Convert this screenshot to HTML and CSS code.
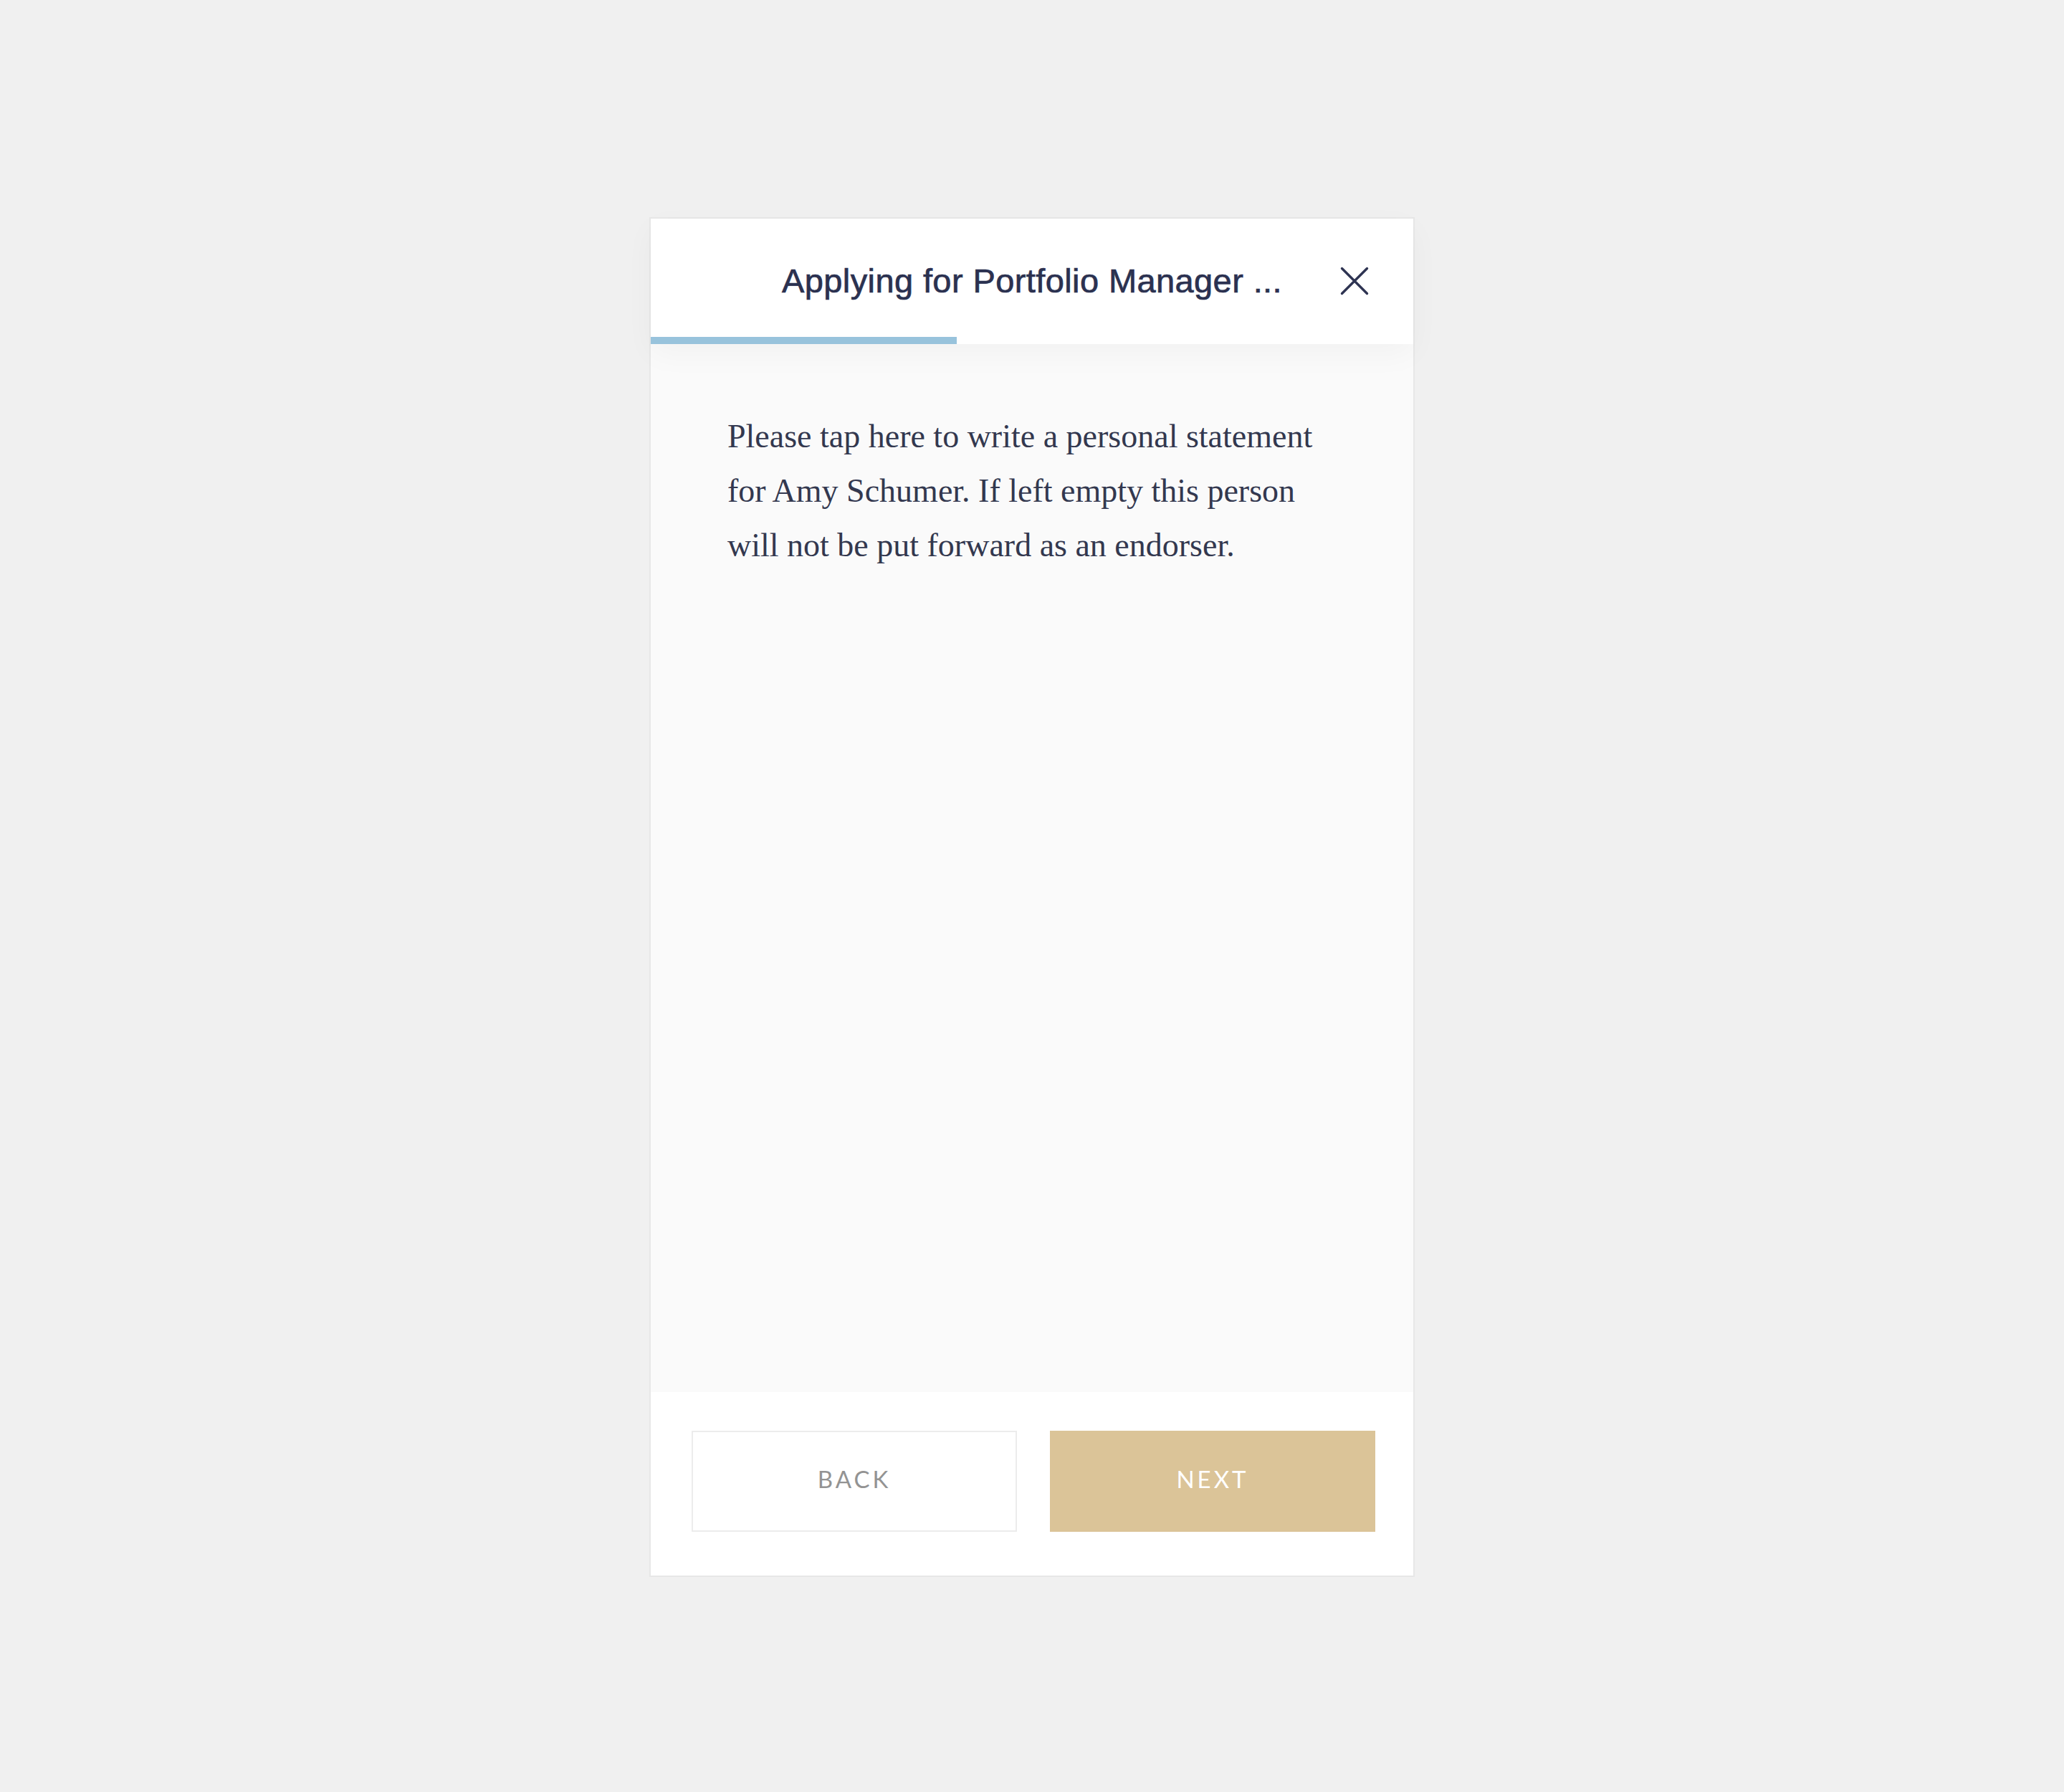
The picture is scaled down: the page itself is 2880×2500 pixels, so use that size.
FILE: index.html
```html
<!DOCTYPE html>
<html lang="en">
<head>
<meta charset="utf-8">
<title>Applying for Portfolio Manager</title>
<link rel="stylesheet" href="styles.css">
</head>
<body>
<div class="page">
  <div class="card">
    <header class="card-header">
      <div class="header-row">
        <span class="spacer"></span>
        <h1 class="title">Applying for Portfolio Manager ...</h1>
        <button class="close" aria-label="Close">
          <svg viewBox="0 0 44 44" width="44" height="44">
            <path d="M4.5 4.5 L39.5 39.5 M39.5 4.5 L4.5 39.5" fill="none" stroke="#2e3452" stroke-width="3.4" stroke-linecap="round"/>
          </svg>
        </button>
      </div>
      <div class="progress"><div class="progress-fill" style="width:40.1%"></div></div>
    </header>
    <main class="card-body">
      <p class="statement">Please tap here to write a personal statement for Amy Schumer. If left empty this person will not be put forward as an endorser.</p>
    </main>
    <footer class="card-footer">
      <button class="btn btn-back">BACK</button>
      <button class="btn btn-next">NEXT</button>
    </footer>
  </div>
</div>
</body>
</html>
```

FILE: styles.css
```css
html, body {
  margin: 0;
  padding: 0;
  background: #f0f0f0;
}

.page {
  padding-top: 303px;
  padding-bottom: 300px;
}

.card {
  width: 1068px;
  margin: 0 auto;
  box-sizing: border-box;
  border: 2px solid #e7e7e7;
  background: #ffffff;
  display: flex;
  flex-direction: column;
}

.card-header {
  background: #ffffff;
  position: relative;
  z-index: 1;
  box-shadow: 0 14px 40px rgba(0, 0, 0, 0.035);
}

.header-row {
  height: 165px;
  box-sizing: border-box;
  padding-top: 8px;
  display: grid;
  grid-template-columns: 1fr auto 1fr;
  align-items: center;
}

.title {
  margin: 0;
  font-family: "Liberation Sans", Arial, sans-serif;
  font-size: 47px;
  font-weight: 400;
  -webkit-text-stroke: 0.7px #2b3150;
  color: #2b3150;
  white-space: nowrap;
  letter-spacing: 0.4px;
}

.close {
  justify-self: end;
  margin-right: 60px;
  width: 44px;
  height: 44px;
  padding: 0;
  border: 0;
  background: transparent;
  display: flex;
}

.progress {
  height: 10px;
  background: #ffffff;
}

.progress-fill {
  height: 100%;
  background: #98c3dc;
}

.card-body {
  background: #fafafa;
  height: 1462px;
  box-sizing: border-box;
  padding: 91px 0 0 107px;
}

.statement {
  margin: 0;
  width: 845px;
  font-family: "Liberation Serif", "Times New Roman", serif;
  font-size: 46px;
  line-height: 76px;
  color: #33384f;
}

.card-footer {
  background: #ffffff;
  display: grid;
  grid-template-columns: 1fr 1fr;
  column-gap: 46px;
  padding: 54px 53px 61px 57px;
}

.btn {
  height: 141px;
  box-sizing: border-box;
  padding: 0 0 8px;
  font-family: Lato, "Open Sans", sans-serif;
  font-size: 33px;
  letter-spacing: 4px;
  font-weight: 400;
  cursor: pointer;
}

.btn-back {
  background: #ffffff;
  border: 2px solid #ececec;
  color: #939393;
}

.btn-next {
  background: #dbc498;
  border: 0;
  color: #ffffff;
}
```
